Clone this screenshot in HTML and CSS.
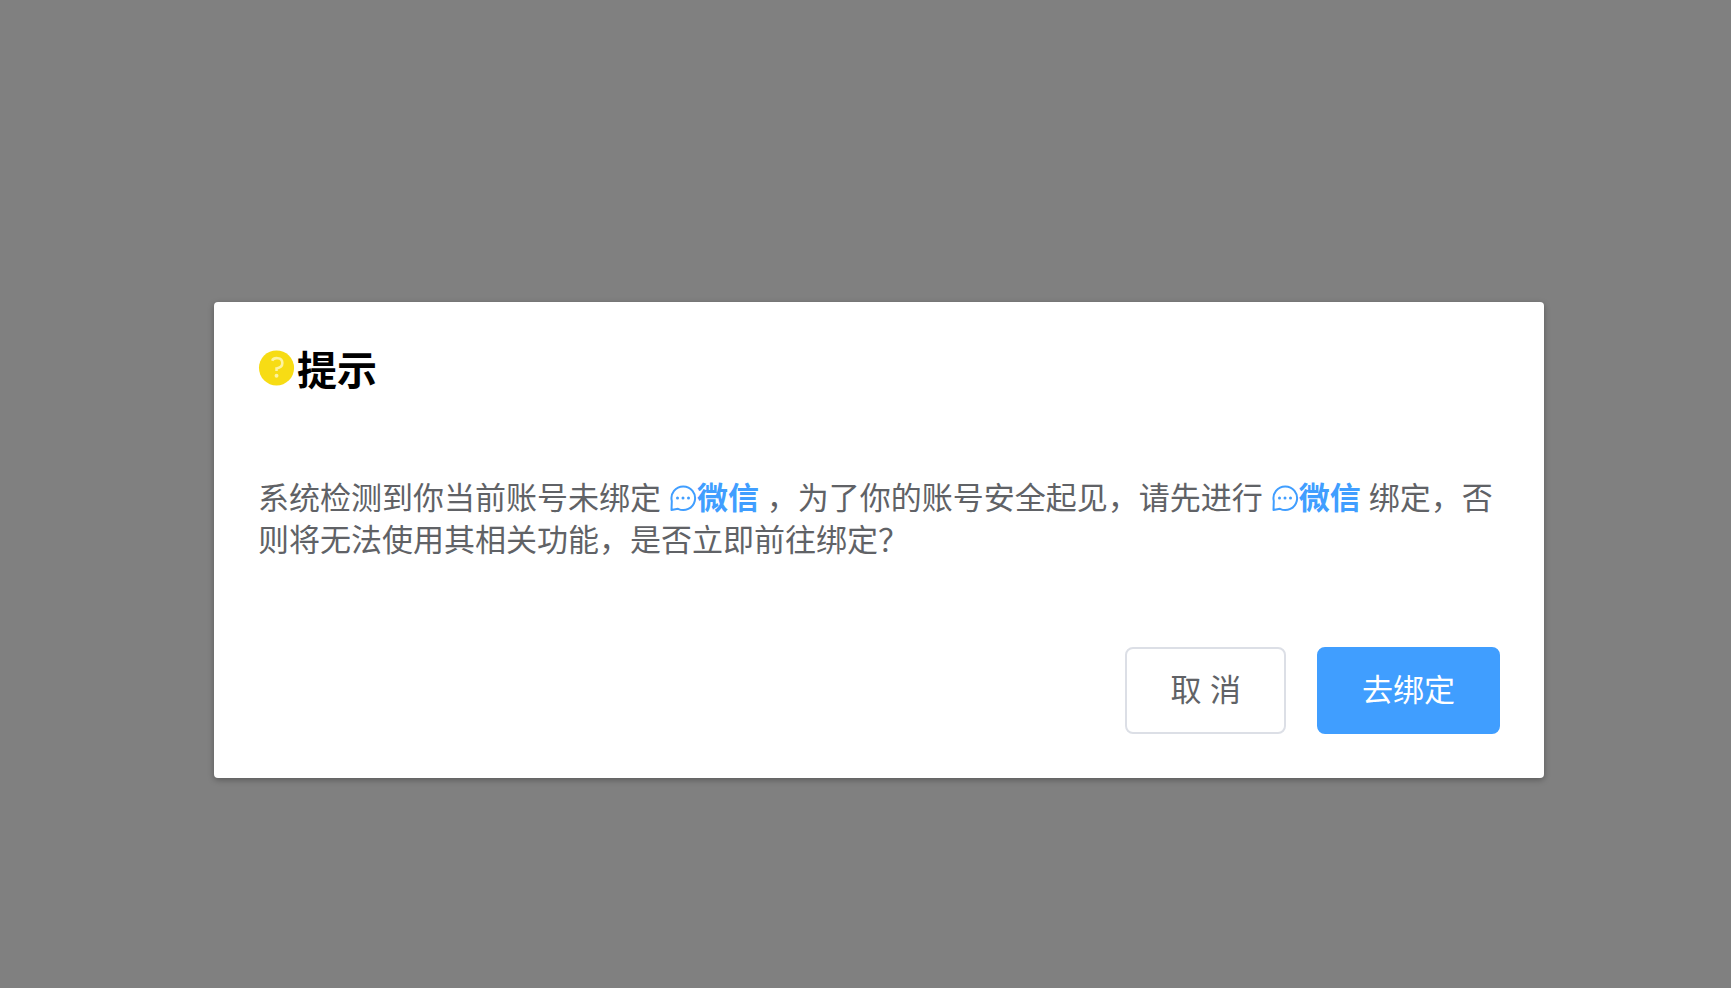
FILE: index.html
```html
<!DOCTYPE html>
<html lang="zh-CN">
<head>
    <meta charset="UTF-8">
    <meta name="viewport" content="width=device-width, initial-scale=1.0">
    <title>提示</title>
    <link rel="stylesheet" href="styles.css">
</head>
<body>
    <svg class="sprite" aria-hidden="true">
        <symbol id="icon-chat" viewBox="0 0 28 28">
            <path d="M2.5 26L2.8 17A11.8 11.8 0 1 1 9 24.8Z" fill="none" stroke="currentColor" stroke-width="2" stroke-linejoin="round"/>
            <circle cx="8.5" cy="14" r="1.5" fill="currentColor"/>
            <circle cx="14" cy="14" r="1.5" fill="currentColor"/>
            <circle cx="19.5" cy="14" r="1.5" fill="currentColor"/>
        </symbol>
    </svg>

    <div class="dialog" role="dialog" aria-labelledby="dialogTitle">
        <div class="dialog-header">
            <svg class="icon-question" viewBox="0 0 40 40" aria-hidden="true">
                <circle cx="19" cy="22" r="18" fill="#f7dc14"/>
                <path d="M14.5 14.5C16 11 25 10.5 25 17C25 20.5 22.5 22 19 22.5V25" fill="none" stroke="#fdf3a0" stroke-width="2.6"/>
                <circle cx="19" cy="30" r="2" fill="#fdf3a0"/>
            </svg>
            <h2 id="dialogTitle">提示</h2>
        </div>
        <div class="dialog-body">
            <p>系统检测到你当前账号未绑定 <b class="wechat"><svg class="icon-chat"><use href="#icon-chat"/></svg>微信</b> ，为了你的账号安全起见，请先进行 <b class="wechat"><svg class="icon-chat"><use href="#icon-chat"/></svg>微信</b> 绑定，否则将无法使用其相关功能，是否立即前往绑定？</p>
        </div>
        <div class="dialog-footer">
            <button type="button" class="btn">取 消</button>
            <button type="button" class="btn btn-primary">去绑定</button>
        </div>
    </div>
</body>
</html>
```

FILE: styles.css
```css
* { box-sizing: border-box; }
body { margin: 0; min-height: 100vh; padding: 302px 187px 0 214px; background: #808080; font-family: "Liberation Sans", "Noto Sans CJK SC", sans-serif; }
.sprite { position: absolute; width: 0; height: 0; }

.dialog { padding: 44px; background: #fff; border-radius: 4px; box-shadow: 0 2px 6px rgba(0, 0, 0, .3); }
.dialog-header { display: flex; align-items: flex-start; }
.dialog-header h2 { margin: 0; font-size: 40px; line-height: 50px; color: #000; }
.icon-question { width: 39px; height: 40px; }

.dialog-body { padding: 80px 0 87px; color: #606266; font-family: Lato, "Noto Sans CJK SC", sans-serif; font-size: 31px; line-height: 42px; }
.dialog-body p { margin: 0; }
.wechat { color: #409eff; }
.icon-chat { width: 28px; height: 28px; vertical-align: -3px; }

.dialog-footer { display: flex; justify-content: flex-end; gap: 31px; }
.btn { height: 87px; padding: 0 43px; border: 2px solid #dcdfe6; border-radius: 8px; background: #fff; color: #606266; font-family: inherit; font-size: 31px; line-height: 42px; cursor: pointer; }
.btn-primary { border-color: #409eff; background: #409eff; color: #fff; }
```
